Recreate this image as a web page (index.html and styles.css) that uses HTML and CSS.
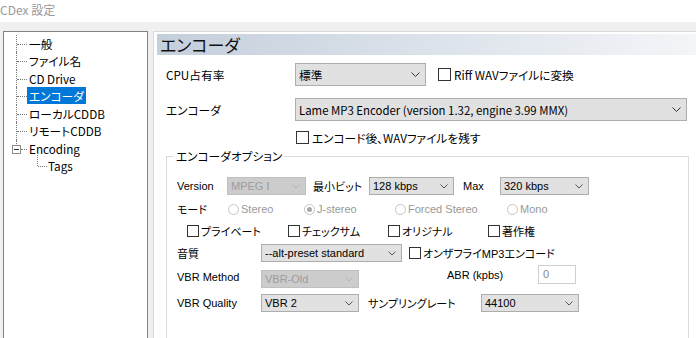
FILE: index.html
```html
<!DOCTYPE html>
<html lang="ja">
<head>
<meta charset="utf-8">
<title>CDex 設定</title>
<link rel="stylesheet" href="styles.css">
</head>
<body>
<div class="titlebar">CDex 設定</div>
<div class="window">
  <div class="tree">
    <ul class="tree-list">
      <li class="node"><span class="lbl">一般</span></li>
      <li class="node"><span class="lbl">ファイル名</span></li>
      <li class="node"><span class="lbl">CD Drive</span></li>
      <li class="node"><span class="lbl sel">エンコーダ</span></li>
      <li class="node"><span class="lbl">ローカルCDDB</span></li>
      <li class="node"><span class="lbl">リモートCDDB</span></li>
      <li class="node node-last"><span class="toggle"></span><span class="lbl">Encoding</span></li>
      <li class="node child"><span class="lbl">Tags</span></li>
    </ul>
  </div>
  <div class="panel">
    <div class="page-title">エンコーダ</div>
    <div class="form">
      <div class="row row-cpu">
        <span class="lab lab-main">CPU占有率</span>
        <div class="combo combo-std"><span>標準</span><svg class="chev" width="9" height="5" viewBox="0 0 9 5"><polyline points="0.5,0.5 4.5,4.5 8.5,0.5" fill="none" stroke="#333" stroke-width="1"/></svg></div>
        <span class="chk chk-main chk-riff"></span>
        <span class="chk-text">Riff WAVファイルに変換</span>
      </div>
      <div class="row row-enc">
        <span class="lab lab-main">エンコーダ</span>
        <div class="combo combo-enc"><span>Lame MP3 Encoder (version 1.32, engine 3.99 MMX)</span><svg class="chev" width="9" height="5" viewBox="0 0 9 5"><polyline points="0.5,0.5 4.5,4.5 8.5,0.5" fill="none" stroke="#333" stroke-width="1"/></svg></div>
      </div>
      <div class="row row-keep">
        <span class="chk chk-main"></span>
        <span class="chk-text">エンコード後、WAVファイルを残す</span>
      </div>
      <div class="group">
        <div class="group-title">エンコーダオプション</div>
        <div class="grow g1">
          <span class="gl gl-ver">Version</span>
          <div class="gcombo dis w-mpeg"><span>MPEG I</span><svg class="gchev" width="8" height="5" viewBox="0 0 8 5"><polyline points="0.5,0.5 4,4 7.5,0.5" fill="none" stroke="#b4b4b4"/></svg></div>
          <span class="gl gl-min">最小ビット</span>
          <div class="gcombo w-128"><span>128 kbps</span><svg class="gchev" width="8" height="5" viewBox="0 0 8 5"><polyline points="0.5,0.5 4,4 7.5,0.5" fill="none" stroke="#555"/></svg></div>
          <span class="gl gl-max">Max</span>
          <div class="gcombo w-320"><span>320 kbps</span><svg class="gchev" width="8" height="5" viewBox="0 0 8 5"><polyline points="0.5,0.5 4,4 7.5,0.5" fill="none" stroke="#555"/></svg></div>
        </div>
        <div class="grow g2">
          <span class="gl gl-mode">モード</span>
          <span class="radio r-stereo"><span class="rb"></span>Stereo</span>
          <span class="radio r-joint"><span class="rb on"></span>J-stereo</span>
          <span class="radio r-forced"><span class="rb"></span>Forced Stereo</span>
          <span class="radio"><span class="rb"></span>Mono</span>
        </div>
        <div class="grow g3">
          <span class="gchk gc1"><span class="chk chk-sm"></span>プライベート</span>
          <span class="gchk gc2"><span class="chk chk-sm"></span>チェックサム</span>
          <span class="gchk gc3"><span class="chk chk-sm"></span>オリジナル</span>
          <span class="gchk"><span class="chk chk-sm"></span>著作権</span>
        </div>
        <div class="grow g4">
          <span class="gl gl-wide">音質</span>
          <div class="gcombo w-preset"><span>--alt-preset standard</span><svg class="gchev" width="8" height="5" viewBox="0 0 8 5"><polyline points="0.5,0.5 4,4 7.5,0.5" fill="none" stroke="#555"/></svg></div>
          <span class="gchk gc-fly"><span class="chk chk-sm"></span>オンザフライMP3エンコード</span>
        </div>
        <div class="grow g5">
          <span class="gl gl-wide gl-vm">VBR Method</span>
          <div class="gcombo dis w-vbr vm-combo"><span>VBR-Old</span><svg class="gchev" width="8" height="5" viewBox="0 0 8 5"><polyline points="0.5,0.5 4,4 7.5,0.5" fill="none" stroke="#b4b4b4"/></svg></div>
          <span class="gl gl-abr">ABR (kpbs)</span>
          <div class="edit">0</div>
        </div>
        <div class="grow g6">
          <span class="gl gl-wide">VBR Quality</span>
          <div class="gcombo w-vbr"><span>VBR 2</span><svg class="gchev" width="8" height="5" viewBox="0 0 8 5"><polyline points="0.5,0.5 4,4 7.5,0.5" fill="none" stroke="#555"/></svg></div>
          <span class="gl gl-rate">サンプリングレート</span>
          <div class="gcombo w-vbr"><span>44100</span><svg class="gchev" width="8" height="5" viewBox="0 0 8 5"><polyline points="0.5,0.5 4,4 7.5,0.5" fill="none" stroke="#555"/></svg></div>
        </div>
      </div>
    </div>
  </div>
</div>
</body>
</html>
```

FILE: styles.css
```css
* { box-sizing: border-box; }
html, body { margin: 0; padding: 0; }
body {
  width: 696px;
  height: 338px;
  overflow: hidden;
  background: #f0f0f0;
  font-family: "Noto Sans CJK JP", sans-serif;
  font-feature-settings: "palt";
  font-size: 11.7px;
  color: #000;
}
.titlebar {
  height: 22px;
  background: #fff;
  color: #999;
  font-size: 12px;
  line-height: 20px;
  padding-left: 0;
}
.window {
  display: flex;
  height: 316px;
  padding: 9px 0 0 3px;
  gap: 5px;
}
.tree {
  width: 145px;
  flex: none;
  background: #fff;
  border: 1px solid #828282;
  border-bottom: none;
  padding-top: 2.5px;
}
.tree-list { list-style: none; margin: 0; padding: 0; }
.node {
  position: relative;
  height: 17.5px;
  line-height: 17.5px;
  padding-left: 25px;
  white-space: nowrap;
}
.node::before {
  content: "";
  position: absolute;
  left: 12px;
  top: 0;
  bottom: 0;
  border-left: 1px dotted #7a7a7a;
}
.node::after {
  content: "";
  position: absolute;
  left: 13px;
  top: 9px;
  width: 10px;
  border-top: 1px dotted #7a7a7a;
}
.node-last::before { bottom: auto; height: 6px; }
.node-last::after { left: 17px; width: 6px; }
.toggle {
  position: absolute;
  left: 8px;
  top: 5px;
  width: 9px;
  height: 9px;
  border: 1px solid #8c8c8c;
  background: #fff;
  z-index: 1;
}
.toggle::after {
  content: "";
  position: absolute;
  left: 1px;
  top: 3px;
  width: 5px;
  height: 1px;
  background: #333;
}
.child { padding-left: 44px; }
.child::before { left: 33px; top: -4px; bottom: auto; height: 13px; }
.child::after { left: 34px; width: 9px; }
.lbl { display: inline-block; line-height: 17px; }
.sel {
  background: #0078d7;
  color: #fff;
  padding: 0 2px;
  margin-left: -2px;
}
.panel {
  flex: 1;
  background: #fff;
  border-left: 1px solid #d9d9d9;
  border-top: 1px solid #d9d9d9;
  padding: 2px 0 0 3px;
  min-width: 0;
}
.page-title {
  height: 21px;
  line-height: 21px;
  font-size: 17px;
  padding-left: 3px;
  color: #111;
  background: linear-gradient(to right, #c4cfdc, #f3f5f8);
}
.form { padding-left: 9px; }
.row { display: flex; align-items: center; }
.row-cpu { margin-top: 8px; height: 23px; }
.row-enc { margin-top: 12px; height: 23px; }
.row-keep { margin-top: 10px; height: 13px; padding-left: 130px; }
.lab-main { width: 129px; flex: none; }
.combo {
  height: 23px;
  display: flex;
  align-items: center;
  justify-content: space-between;
  background: #e1e1e1;
  border: 1px solid #adadad;
  padding: 0 5px 0 3px;
  white-space: nowrap;
  flex: none;
}
.combo-std { width: 131px; }
.combo-enc { width: 392px; font-size: 11.4px; }
.chk {
  display: inline-block;
  flex: none;
  background: #fff;
  border: 1px solid #333;
}
.chk-main { width: 13px; height: 13px; }
.chk-riff { margin-left: 12px; }
.chk-text { margin-left: 3px; white-space: nowrap; }
.group {
  margin-top: 12px;
  width: 523px;
  height: 190px;
  border: 1px solid #dcdcdc;
  border-bottom: none;
  padding-left: 10px;
}
.group-title {
  width: fit-content;
  height: 16px;
  line-height: 16px;
  margin: -9px 0 0 -3px;
  padding: 0 2px;
  background: #fff;
}
.grow {
  display: flex;
  align-items: center;
  height: 18px;
  font-family: "Liberation Sans", "Noto Sans CJK JP", sans-serif;
  font-size: 11px;
  white-space: nowrap;
}
.g1 { margin-top: 13px; }
.g2 { margin-top: 5px; }
.g3 { margin-top: 4px; }
.g4 { margin-top: 4px; }
.g5 { margin-top: 3px; height: 23px; align-items: flex-start; }
.g6 { margin-top: 6px; }
.gl { flex: none; }
.gl-ver { width: 50px; }
.gl-min { margin-left: 7px; width: 56px; }
.gl-max { margin-left: 9px; width: 37px; }
.gl-mode { width: 51px; }
.gl-wide { width: 84px; }
.gl-vm { margin-top: 3px; line-height: 18px; }
.gl-abr { margin-left: 88px; width: 91px; line-height: 18px; margin-top: 1px; }
.gl-rate { margin-left: 9px; width: 113px; }
.gcombo {
  flex: none;
  height: 18px;
  display: flex;
  align-items: center;
  justify-content: space-between;
  background: #e1e1e1;
  border: 1px solid #adadad;
  padding: 0 5px 0 3px;
}
.gcombo.dis { background: #cccccc; border-color: #bfbfbf; color: #9c9c9c; }
.w-mpeg { width: 79px; }
.w-128 { width: 85px; }
.w-320 { width: 89px; }
.w-preset { width: 141px; }
.w-vbr { width: 98px; }
.vm-combo { margin-top: 5px; }
.radio { display: inline-flex; align-items: center; color: #999; flex: none; }
.r-stereo { width: 76px; }
.r-joint { width: 91px; }
.r-forced { width: 112px; }
.rb {
  width: 11px;
  height: 11px;
  border-radius: 50%;
  border: 1px solid #c4c4c4;
  background: #fff;
  margin-right: 2px;
  display: inline-flex;
  align-items: center;
  justify-content: center;
}
.rb.on::after {
  content: "";
  width: 5px;
  height: 5px;
  border-radius: 50%;
  background: #a8a8a8;
}
.gchk { display: inline-flex; align-items: center; flex: none; }
.gc1 { margin-left: 10px; width: 101px; }
.gc2 { width: 100px; }
.gc3 { width: 100px; }
.gc-fly { margin-left: 7px; }
.chk-sm { width: 12px; height: 12px; margin-right: 2px; }
.edit {
  width: 38px;
  height: 19px;
  border: 1px solid #cfcfcf;
  background: #fff;
  color: #888;
  padding-left: 4px;
  line-height: 16px;
  flex: none;
}
```
